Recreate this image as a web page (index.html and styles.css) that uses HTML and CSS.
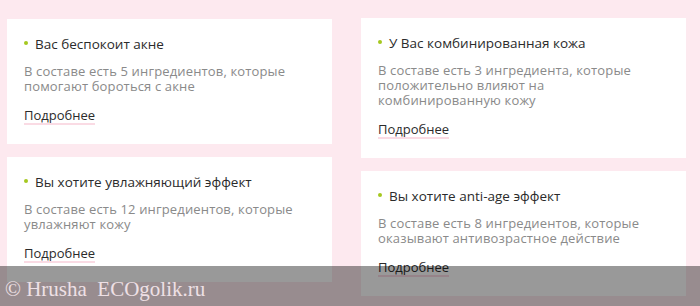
FILE: index.html
```html
<!DOCTYPE html>
<html lang="ru">
<head>
  <meta charset="UTF-8">
  <meta name="viewport" content="width=device-width, initial-scale=1.0">
  <title>Состав</title>
  <link rel="stylesheet" href="styles.css">
</head>
<body>

  <div class="grid">
    <div class="col">
      <div class="card">
        <h3 class="card-title">Вас беспокоит акне</h3>
        <p class="card-text">В составе есть 5 ингредиентов, которые помогают бороться с акне</p>
        <a class="more" href="#">Подробнее</a>
      </div>
      <div class="card">
        <h3 class="card-title">Вы хотите увлажняющий эффект</h3>
        <p class="card-text">В составе есть 12 ингредиентов, которые увлажняют кожу</p>
        <a class="more" href="#">Подробнее</a>
      </div>
    </div>
    <div class="col col-right">
      <div class="card">
        <h3 class="card-title">У Вас комбинированная кожа</h3>
        <p class="card-text">В составе есть 3 ингредиента, которые положительно влияют на<br>комбинированную кожу</p>
        <a class="more" href="#">Подробнее</a>
      </div>
      <div class="card">
        <h3 class="card-title">Вы хотите anti-age эффект</h3>
        <p class="card-text">В составе есть 8 ингредиентов, которые оказывают антивозрастное действие</p>
        <a class="more" href="#">Подробнее</a>
      </div>
    </div>
  </div>

  <div class="watermark">
    <span>© Hrusha&nbsp; ECOgolik.ru</span>
  </div>

</body>
</html>
```

FILE: styles.css
```css
body {
  margin: 0;
  padding: 0;
  background: #fde9ef;
  font-family: 'Open Sans', sans-serif;
  color: #333;
  height: 306px;
  overflow: hidden;
}

.grid {
  display: flex;
  gap: 29px;
  padding: 19px 0 0 7px;
}

.col {
  width: 325px;
  display: flex;
  flex-direction: column;
  gap: 13px;
}

.col-right {
  margin-top: -1px;
}

.card {
  background: #fff;
  padding: 17px 17px 19px;
}

.card-title {
  position: relative;
  margin: 0 0 12px;
  padding-left: 11px;
  font-size: 13.5px;
  font-weight: 400;
  line-height: 16px;
  color: #2b2b2b;
}

.card-title::before {
  content: "";
  position: absolute;
  left: 0;
  top: 5px;
  width: 4px;
  height: 4px;
  border-radius: 50%;
  background: #a5c81f;
}

.card-text {
  margin: 0 0 14px;
  font-size: 13px;
  line-height: 15px;
  letter-spacing: 0.15px;
  color: #8a8a8a;
  max-width: 280px;
}

.more {
  display: block;
  width: fit-content;
  font-size: 13px;
  line-height: 15px;
  color: #2b2b2b;
  text-decoration: none;
  border-bottom: 2px solid #fadbe4;
}

.watermark {
  position: absolute;
  left: 0;
  right: 0;
  top: 266px;
  height: 40px;
  background: rgba(0, 0, 0, 0.4);
}

.watermark span {
  position: absolute;
  left: 5px;
  top: 12px;
  font-family: 'Liberation Serif', serif;
  font-size: 21px;
  line-height: 22px;
  color: #eee0e5;
}
```
